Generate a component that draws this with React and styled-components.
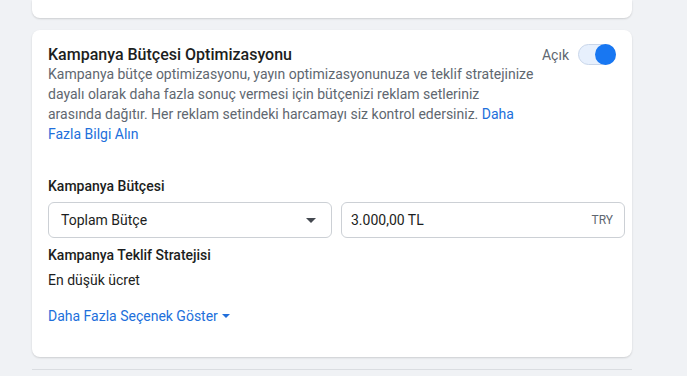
import React, { useState } from "react";
import styled, { createGlobalStyle } from "styled-components";

const GlobalStyle = createGlobalStyle`
  body {
    margin: 0;
    background: #f0f2f5;
    font-family: Roboto, "Liberation Sans", Arial, sans-serif;
    color: #1c1e21;
  }
`;

const Page = styled.div`
  width: 687px;
  height: 376px;
  overflow: hidden;
`;

const Column = styled.div`
  width: 600px;
  margin-left: 32px;
  display: flex;
  flex-direction: column;
  gap: 12px;
`;

const PrevCard = styled.div`
  height: 18px;
  background: #fff;
  border-radius: 0 0 8px 8px;
  box-shadow: 0 1px 2px rgba(0, 0, 0, 0.15);
`;

const Card = styled.div`
  height: 327px;
  box-sizing: border-box;
  background: #fff;
  border-radius: 8px;
  box-shadow: 0 1px 2px rgba(0, 0, 0, 0.15);
  padding: 16px 16px 0 16px;
`;

const Header = styled.div`
  display: flex;
  align-items: flex-start;
`;

const HeaderText = styled.div`
  width: 490px;
`;

const Title = styled.div`
  font-size: 16px;
  line-height: 18px;
  font-weight: 500;
  color: #1c1e21;
`;

const Desc = styled.p`
  margin: 0;
  font-size: 14px;
  line-height: 20px;
  color: #606770;
  white-space: nowrap;
`;

const Link = styled.a`
  color: #216fdb;
  text-decoration: none;
  cursor: pointer;
`;

const ToggleWrap = styled.label`
  margin-left: auto;
  display: flex;
  align-items: center;
  gap: 9px;
  font-size: 14px;
  color: #606770;
  margin-top: -2px;
`;

const Track = styled.span`
  position: relative;
  display: inline-block;
  width: 38px;
  height: 21px;
  box-sizing: border-box;
  border-radius: 11px;
  background: ${(p) => (p.$on ? "#e7f0fd" : "#e4e6eb")};
  border: 1px solid ${(p) => (p.$on ? "#c9d6ea" : "#ccd0d5")};
  cursor: pointer;
`;

const Knob = styled.span`
  position: absolute;
  top: -1px;
  ${(p) => (p.$on ? "right: -1px;" : "left: -1px;")}
  width: 21px;
  height: 21px;
  border-radius: 50%;
  background: ${(p) => (p.$on ? "#1877f2" : "#fff")};
`;

const Label = styled.div`
  font-size: 14px;
  line-height: 20px;
  font-weight: 500;
  color: #1c1e21;
  margin-top: ${(p) => p.$top || 0}px;
`;

const BudgetRow = styled.div`
  display: grid;
  grid-template-columns: 284px 284px;
  gap: 9px;
  margin-top: 6px;
`;

const Field = styled.div`
  height: 36px;
  box-sizing: border-box;
  border: 1px solid #ccd0d5;
  border-radius: 6px;
  display: flex;
  align-items: center;
  padding: ${(p) => (p.$select ? "0 15px 0 12px" : "0 11px 0 9px")};
  font-size: 14px;
  color: #1c1e21;
  background: #fff;
`;

const Grow = styled.span`
  flex: 1;
`;

const Currency = styled.span`
  font-size: 12px;
  color: #606770;
`;

const Caret = styled.span`
  width: 0;
  height: 0;
  border-left: ${(p) => p.$w}px solid transparent;
  border-right: ${(p) => p.$w}px solid transparent;
  border-top: ${(p) => p.$h}px solid ${(p) => p.$color};
  display: inline-block;
  vertical-align: middle;
`;

const Value = styled.div`
  font-size: 14px;
  line-height: 20px;
  color: #1c1e21;
  margin-top: 5px;
`;

const MoreLink = styled(Link)`
  display: inline-flex;
  align-items: center;
  gap: 4px;
  font-size: 14px;
  line-height: 20px;
  margin-top: 16px;
`;

const Footer = styled.div`
  border-top: 1px solid #dadde1;
  height: 10px;
`;

export default function App() {
  const [on, setOn] = useState(true);
  return (
    <Page>
      <GlobalStyle />
      <Column>
        <PrevCard />
        <Card>
          <Header>
            <HeaderText>
              <Title>Kampanya Bütçesi Optimizasyonu</Title>
              <Desc>
                Kampanya bütçe optimizasyonu, yayın optimizasyonunuza ve teklif stratejinize
                <br />
                dayalı olarak daha fazla sonuç vermesi için bütçenizi reklam setleriniz
                <br />
                arasında dağıtır. Her reklam setindeki harcamayı siz kontrol edersiniz.{" "}
                <Link>Daha</Link>
                <br />
                <Link>Fazla Bilgi Alın</Link>
              </Desc>
            </HeaderText>
            <ToggleWrap onClick={() => setOn(!on)}>
              {on ? "Açık" : "Kapalı"}
              <Track $on={on}>
                <Knob $on={on} />
              </Track>
            </ToggleWrap>
          </Header>

          <Label $top={32}>Kampanya Bütçesi</Label>
          <BudgetRow>
            <Field $select>
              <Grow>Toplam Bütçe</Grow>
              <Caret $w={5} $h={5} $color="#444950" />
            </Field>
            <Field>
              <Grow>3.000,00 TL</Grow>
              <Currency>TRY</Currency>
            </Field>
          </BudgetRow>

          <Label $top={7}>Kampanya Teklif Stratejisi</Label>
          <Value>En düşük ücret</Value>
          <div>
            <MoreLink>
              Daha Fazla Seçenek Göster
              <Caret $w={4} $h={4} $color="#216fdb" />
            </MoreLink>
          </div>
        </Card>
        <Footer />
      </Column>
    </Page>
  );
}
